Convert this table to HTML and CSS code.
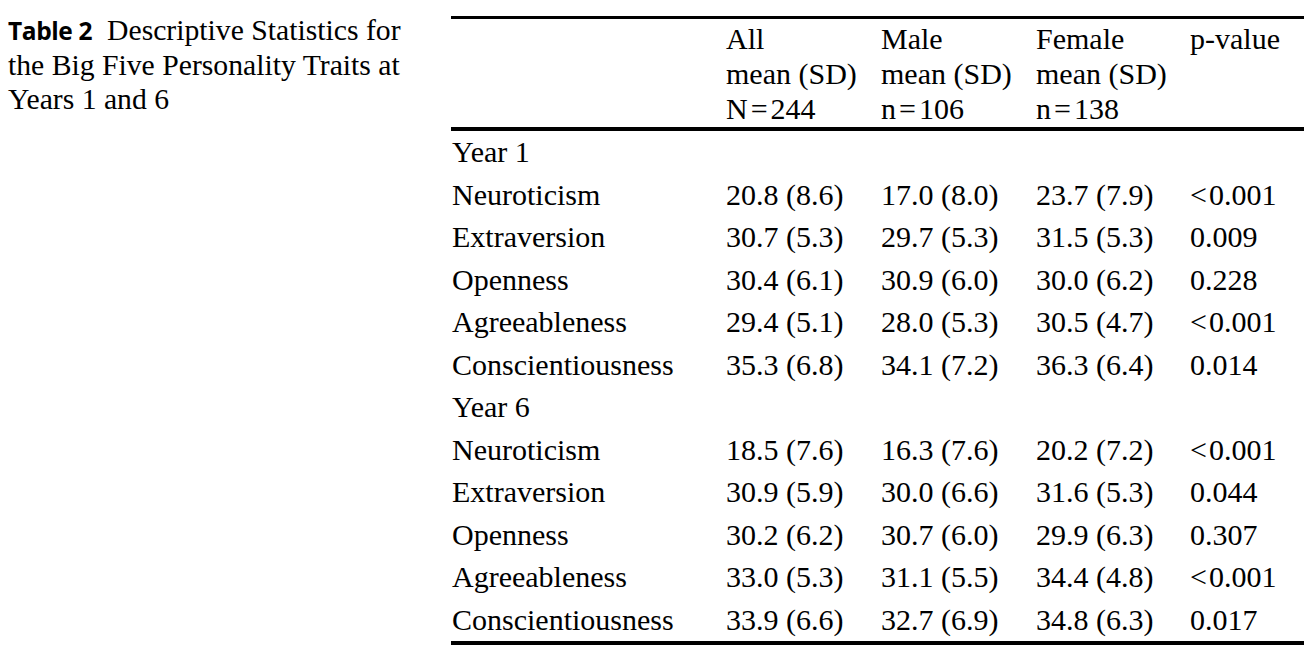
FILE: index.html
```html
<!DOCTYPE html>
<html lang="en">
<head>
<meta charset="utf-8">
<title>Table 2</title>
<link rel="stylesheet" href="styles.css">
</head>
<body>
<div class="page">
  <p class="caption"><span class="label">Table 2</span><span class="title">Descriptive Statistics for the Big Five Personality Traits at Years 1 and 6</span></p>
  <table class="stats">
    <colgroup>
      <col class="c-label">
      <col class="c-num">
      <col class="c-num">
      <col class="c-num2">
      <col class="c-p">
    </colgroup>
    <thead>
      <tr>
        <th></th>
        <th>All<br>mean (SD)<br>N<span class="eq">=</span>244</th>
        <th>Male<br>mean (SD)<br>n<span class="eq">=</span>106</th>
        <th>Female<br>mean (SD)<br>n<span class="eq">=</span>138</th>
        <th>p-value</th>
      </tr>
    </thead>
    <tbody>
      <tr><td colspan="5">Year 1</td></tr>
      <tr><td>Neuroticism</td><td>20.8 (8.6)</td><td>17.0 (8.0)</td><td>23.7 (7.9)</td><td><span class="lt">&lt;</span>0.001</td></tr>
      <tr><td>Extraversion</td><td>30.7 (5.3)</td><td>29.7 (5.3)</td><td>31.5 (5.3)</td><td>0.009</td></tr>
      <tr><td>Openness</td><td>30.4 (6.1)</td><td>30.9 (6.0)</td><td>30.0 (6.2)</td><td>0.228</td></tr>
      <tr><td>Agreeableness</td><td>29.4 (5.1)</td><td>28.0 (5.3)</td><td>30.5 (4.7)</td><td><span class="lt">&lt;</span>0.001</td></tr>
      <tr><td>Conscientiousness</td><td>35.3 (6.8)</td><td>34.1 (7.2)</td><td>36.3 (6.4)</td><td>0.014</td></tr>
      <tr><td colspan="5">Year 6</td></tr>
      <tr><td>Neuroticism</td><td>18.5 (7.6)</td><td>16.3 (7.6)</td><td>20.2 (7.2)</td><td><span class="lt">&lt;</span>0.001</td></tr>
      <tr><td>Extraversion</td><td>30.9 (5.9)</td><td>30.0 (6.6)</td><td>31.6 (5.3)</td><td>0.044</td></tr>
      <tr><td>Openness</td><td>30.2 (6.2)</td><td>30.7 (6.0)</td><td>29.9 (6.3)</td><td>0.307</td></tr>
      <tr><td>Agreeableness</td><td>33.0 (5.3)</td><td>31.1 (5.5)</td><td>34.4 (4.8)</td><td><span class="lt">&lt;</span>0.001</td></tr>
      <tr class="last"><td>Conscientiousness</td><td>33.9 (6.6)</td><td>32.7 (6.9)</td><td>34.8 (6.3)</td><td>0.017</td></tr>
    </tbody>
  </table>
</div>
</body>
</html>
```

FILE: styles.css
```css
html, body {
  margin: 0;
  padding: 0;
  background: #ffffff;
  color: #000000;
}

body {
  font-family: "Liberation Serif", "Times New Roman", serif;
}

.page {
  display: flex;
  align-items: flex-start;
  padding: 16px 0 0 8px;
}

.caption {
  width: 425px;
  flex: 0 0 425px;
  margin: -3px 18px 0 0;
  font-size: 29.7px;
  line-height: 34.5px;
}

.caption .label {
  font-family: "Open Sans", "Noto Sans", sans-serif;
  font-weight: 700;
  font-size: 24.5px;
  line-height: 20px;
  letter-spacing: -0.4px;
  margin-right: 15px;
}

.stats {
  flex: 1 1 auto;
  border-collapse: collapse;
  font-size: 30px;
  table-layout: fixed;
}

.c-label { width: 275px; }
.c-num { width: 155px; }
.c-num2 { width: 154px; }
.c-p { width: auto; }

.stats thead tr {
  border-top: 3px solid #000;
  border-bottom: 4px solid #000;
}

.stats tbody tr.last {
  border-bottom: 4px solid #000;
}

.stats th {
  font-weight: normal;
  text-align: left;
  vertical-align: top;
  line-height: 35px;
  padding: 2px 0 1px 0;
  white-space: nowrap;
}

.stats td {
  text-align: left;
  line-height: 42.5px;
  padding: 0;
  white-space: nowrap;
}

.stats td:first-child {
  padding-left: 1px;
}

.eq {
  margin: 0 3px;
}

.lt {
  margin-right: 2px;
}
```
